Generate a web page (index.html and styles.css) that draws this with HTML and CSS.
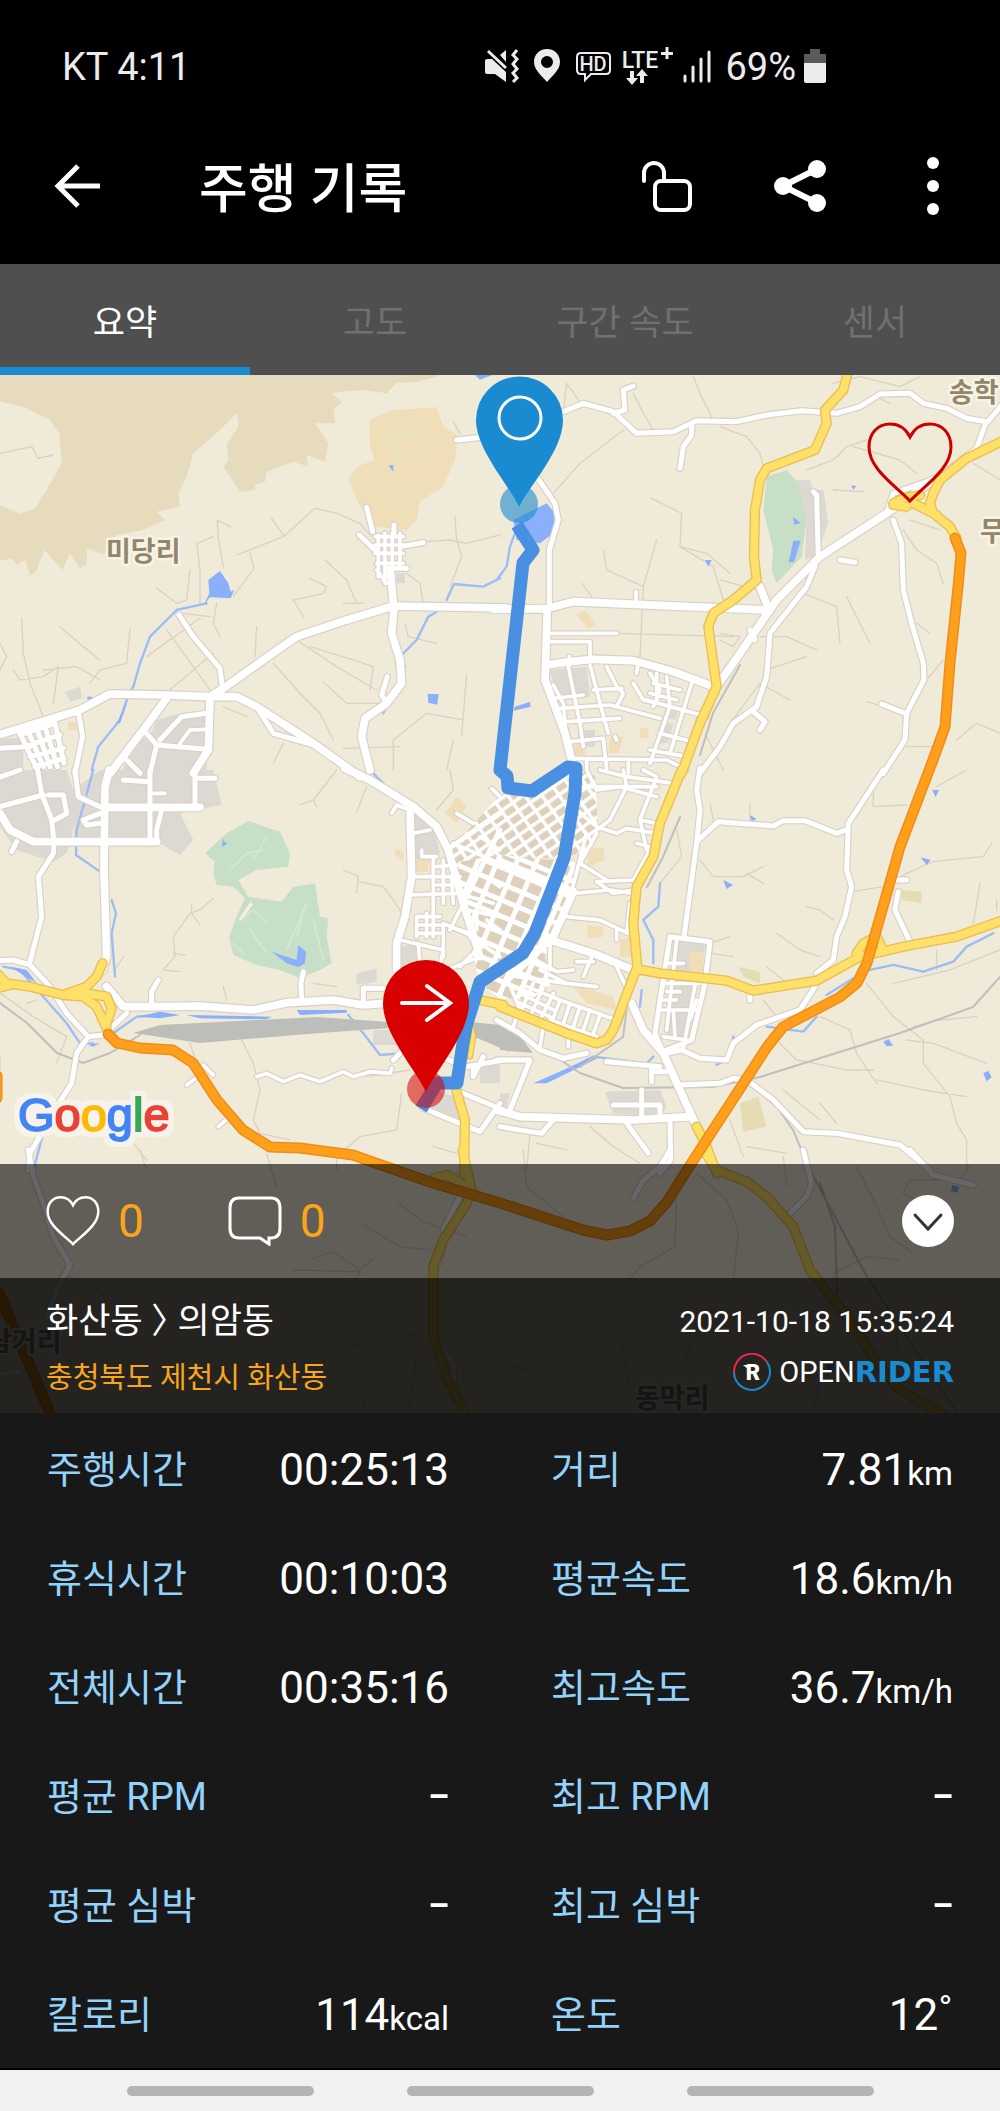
FILE: index.html
```html
<!DOCTYPE html>
<html lang="ko">
<head>
    <meta charset="UTF-8">
    <meta name="viewport" content="width=device-width, initial-scale=1.0">
    <title>주행 기록</title>
    <link rel="stylesheet" href="styles.css">
</head>
<body>

<!-- Status bar -->
<div class="status-bar">
    <span>KT 4:11</span>
    <div class="status-icons">
        <svg width="41" height="40" viewBox="0 0 41 40" fill="#ececec">
            <path d="M0 14q0-2 2-2h5l14 13v10L10 27H2q-2 0-2-2z"/>
            <path d="M15 8l6-5v12z"/>
            <path d="M3 4l18 17" stroke="#ececec" stroke-width="3"/>
            <path d="M32 3l-4 5 4 4-4 5 4 5-4 4 4 5-4 4" fill="none" stroke="#ececec" stroke-width="3"/>
        </svg>
        <svg width="34" height="40" viewBox="0 0 34 40">
            <path d="M13 2C5 2 0 8 0 15c0 8 8 14 13 20 5-6 13-12 13-20C26 8 21 2 13 2zm0 7a6 6 0 1 1 0 12 6 6 0 0 1 0-12z" fill="#ececec"/>
        </svg>
        <svg width="35" height="40" viewBox="0 0 35 40">
            <path d="M5 6h25q4 0 4 4v13q0 4-4 4H15l-6 6v-6H5q-4 0-4-4V10q0-4 4-4z" fill="none" stroke="#ececec" stroke-width="2"/>
            <text x="17" y="24" class="icon-text hd">HD</text>
        </svg>
        <svg width="56" height="40" viewBox="0 0 56 40" fill="#ececec">
            <text x="21" y="21" class="icon-text lte">LTE</text>
            <path d="M42 5h12v3H42zM46.500 0h3v12h-3zM11 24h4v7h4l-6 7-6-7h4zM21 36v-7h-4l6-7 6 7h-4v7z"/>
        </svg>
        <svg width="34" height="40" viewBox="0 0 34 40">
            <path d="M2 29v5M10 20v14M18 12v22M26 5v29" stroke="#ececec" stroke-width="3" stroke-linecap="round"/>
        </svg>
        <span>69%</span>
        <svg width="22" height="40" viewBox="0 0 22 40">
            <path d="M6 2h10v5h6v9H0V7h6z" fill="#5a5a5a"/>
            <path d="M0 16h22v18q0 2-2 2H2q-2 0-2-2z" fill="#ececec"/>
        </svg>
    </div>
</div>

<!-- App bar -->
<header class="app-bar">
    <button class="icon-button back" aria-label="뒤로">
        <svg width="60" height="60" viewBox="0 0 60 60" fill="none" stroke="#fff" stroke-width="5">
            <path d="M32 10L12 30l20 20M12 30h42"/>
        </svg>
    </button>
    <h1>주행 기록</h1>
    <button class="icon-button" aria-label="잠금 해제">
        <svg width="60" height="60" viewBox="0 0 60 60" fill="none" stroke="#fff" stroke-width="4">
            <path d="M7 25v-8a10 10 0 0 1 20 0v7" stroke-linecap="round"/>
            <rect x="18" y="25" width="35" height="29" rx="6"/>
        </svg>
    </button>
    <button class="icon-button" aria-label="공유">
        <svg width="60" height="60" viewBox="0 0 60 60" fill="#fff">
            <path d="M47 13L13 30l34 17" fill="none" stroke="#fff" stroke-width="6"/>
            <circle cx="13" cy="30" r="9"/>
            <circle cx="47" cy="13" r="9"/>
            <circle cx="47" cy="47" r="9"/>
        </svg>
    </button>
    <button class="icon-button" aria-label="더보기">
        <svg width="60" height="60" viewBox="0 0 60 60" fill="#fff">
            <circle cx="30" cy="7" r="6"/>
            <circle cx="30" cy="30" r="6"/>
            <circle cx="30" cy="53" r="6"/>
        </svg>
    </button>
</header>

<!-- Tabs -->
<nav class="tabs">
    <button class="tab active">요약</button>
    <button class="tab">고도</button>
    <button class="tab">구간 속도</button>
    <button class="tab">센서</button>
</nav>

<!-- Map -->
<main class="map">
    <svg class="map-canvas" viewBox="0 375 1000 1038" role="img" aria-label="주행 경로 지도">
        <defs>
            <pattern id="blocks-a" width="14" height="10" patternUnits="userSpaceOnUse" patternTransform="rotate(-35)">
                <rect width="14" height="10" fill="#ddd0bd"/>
                <path d="M0 0H14M0 0V10" stroke="#fff" stroke-width="7"/>
            </pattern>
            <pattern id="blocks-b" width="18" height="15" patternUnits="userSpaceOnUse" patternTransform="rotate(23)">
                <rect width="18" height="15" fill="#ddd0bd"/>
                <path d="M0 0H18M0 0V15" stroke="#fff" stroke-width="10"/>
            </pattern>
            <filter id="halo" x="-10%" y="-20%" width="120%" height="140%">
                <feMorphology in="SourceAlpha" operator="dilate" radius="5" result="wide"/>
                <feFlood flood-color="#f7f3ea"/>
                <feComposite in2="wide" operator="in" result="edge"/>
                <feMerge><feMergeNode in="edge"/><feMergeNode in="SourceGraphic"/></feMerge>
            </filter>

            <!-- White roads, one group per map tile -->
            <g id="roads">
                <g transform="translate(0 370) scale(.3333)">
                    <path class="r3" d="M-20 1100L240 1020 330 972 500 975 630 980 670 955 790 870 890 800 1040 750 1180 708 1520 714"/>
                    <path class="r3" d="M630 980H710L770 1010 940 1120 1080 1220M1172 610L1182 720 1175 790 1200 870 1205 940 1160 1000 1095 1045 1085 1100 1110 1200M500 985L430 1080 330 1210M630 990L625 1140 580 1210"/>
                    <path class="r2" d="M537 735L580 800 660 895 668 960M770 1010L820 1090 940 1125M235 1025L248 1100 225 1210M430 1080L470 1125 620 1138M470 1125L450 1210M480 1110L545 1040 620 1030M0 1135L90 1130M370 1160L420 1210"/>
                    <path class="r2" d="M1100 412L1118 485M1182 465V500M1078 495L1125 540M1270 518L1200 530M1160 595H1220M1370 210L1460 200M1162 920L1145 975 1160 1000"/>
                    <path class="r1" d="M540 1120L570 1080 620 1078M1135 495V620M1155 490V640M1177 490V640M1200 490V590M1125 500H1210M1125 525H1210M1125 550H1210M1130 580H1210M1130 600L1160 640"/>
                    <path class="r2" d="M60 1090L110 1195M85 1085L130 1190M110 1075L150 1190M135 1070L172 1190M165 1060L192 1180M60 1095L165 1060M75 1130L180 1095M90 1160L190 1135M105 1190L192 1165"/>
                </g>
                <g transform="translate(500 370) scale(.3333)">
                    <path class="r3" d="M-20 718L140 716 220 695 800 720M142 716L135 930 195 1090 215 1170M1300 330L1160 430 960 560 830 690 720 850 650 950M140 885L210 875 280 868 400 872 520 905 640 950M780 650L805 715"/>
                    <path class="r2" d="M148 716L148 540 175 450 165 400 110 320M190 125L250 100 340 125 410 190 520 185 590 152 710 155 800 135 905 122 1010 130 1080 110 1140 72 1230 70 1270 100 1340 115 1400 145 1460 155M340 130L375 120 370 60 400 48M575 165V195L550 230 540 295M1510 100L1455 165 1430 235 1310 325 1180 370 1160 430"/>
                    <path class="r2" d="M945 590L920 650 810 790 800 920 770 1010 700 1060 660 1130 600 1210M940 365L950 375 955 560M1180 450L1205 520 1210 660 1235 760 1270 880 1272 930 1220 1030 1215 1110 1150 1210M1145 1002L1215 1030M1020 570L1065 577M760 1025L795 1055 780 1080M750 780L765 810"/>
                    <path class="r1" d="M148 790H350M148 815H270V870M208 860V885M408 665V700M415 875L410 910M270 885L300 1000 325 1090M205 890L240 1060 250 1130M160 945L190 1000 200 1110M320 890L350 950 370 970 350 1010M280 960L365 955M165 985L250 975M180 1015L330 1005 480 1045M200 1055L360 1045M210 1115L310 1105 320 1200"/>
                    <path class="r1" d="M400 940L430 990 470 1000M450 910L480 960 460 1010M470 910L470 990M500 920L510 1010 450 1180M575 940L510 1150M440 990L620 1040M460 940L540 960M450 970L530 990M480 1090L575 1115M450 1140L560 1160M210 1165L500 1170 560 1200M600 1030L595 1050M385 1170V1210M260 1170V1200M345 1100L350 1110"/>
                </g>
                <g transform="translate(0 770) scale(.3333)">
                    <path class="r3" d="M1035 -5L1110 30 1240 110 1310 170 1345 240 1390 400 1440 560M1230 120L1235 320 1215 440 1190 520 1190 600M328 0L315 50 312 300 320 560 308 600M320 650L370 710 470 710 600 708 760 720 860 698 1000 690 1090 705 1150 700M0 130L30 180 100 215 470 215M315 112H600"/>
                    <path class="r2" d="M112 -5L125 70 155 150 162 220 160 250 115 320 125 440 90 575M450 0V210M585 0V110M-10 25L60 0M0 110L130 75M370 30L450 35M590 25H645M145 75L190 75 200 130 165 150M225 0L235 80 300 110M300 130L250 150 260 165 300 160M50 215L35 245M485 120L470 180V215"/>
                    <path class="r2" d="M-10 572L40 570 90 585 150 650 200 730 265 800 230 850 215 940 170 1010 90 1150 85 1200M265 800L310 795 380 730M455 710V665L475 630M905 690L903 640 910 605M1090 700V655H1150"/>
                    <path class="r1" d="M770 920L800 910 850 935 900 915 960 935 1030 905 1060 920 1110 905 1170 910 1175 895M560 945L600 915M610 885L640 915M655 1070L690 1040M455 70H495"/>
                    <path class="r2" d="M1180 870L1230 820M1270 1015L1440 1085 1500 1000M1365 960L1510 1020M1320 860L1400 890 1510 870M1420 890V920L1450 860"/>
                    <path class="r1" d="M1370 130L1420 160M1175 130L1190 105 1230 120M1265 240V260L1310 260M1240 190L1290 180M1235 320H1380M1225 375L1370 370 1480 400M1250 440H1320M1250 465H1320M1250 490H1320M1250 440V500M1280 430V500M1300 260V500M1330 270V400M1355 320L1360 400M1310 290L1370 285M1310 345H1380M1200 510L1330 540 1320 590M1330 560V460L1420 500M1390 400L1350 480"/>
                    <path class="r2" d="M1340 240L1500 130M1400 380L1500 180"/>
                    <path class="r1" d="M1360 220L1500 280M1440 200L1500 240M1400 420L1500 440M1430 430V480M1410 500L1500 560M1255 520L1260 580M1380 590L1430 540M1470 330L1500 350M1475 55L1500 80M1350 470L1410 490M1340 600L1440 560M1460 450L1500 480"/>
                </g>
                <g transform="translate(500 770) scale(.3333)">
                    <path class="r3" d="M0 275L220 365M150 510L280 550 400 600M220 365L160 500 30 620M395 700L430 780 490 850 590 1070M-10 1020L60 1040 400 1050 570 1040"/>
                    <path class="r2" d="M600 -5L590 60 600 120 590 220 552 500M590 215L655 155 820 168 850 152 915 152 1010 190 1040 180M1150 0L1045 160 1040 300 1055 350 1035 440 1010 500 1000 570 950 610M945 650L900 720 770 765 700 820 680 870 600 865 545 840 500 850M1190 330H1220M1195 365L1185 420 1230 515M750 672V690"/>
                    <path class="r2" d="M510 500L630 515 615 640 575 810 500 840M510 500L465 790 490 850M320 875L480 890M455 890V935M455 905H500M530 945L660 940 700 925 740 930 820 990 910 1085 1010 1090 1200 1125 1290 1200"/>
                    <path class="r1" d="M530 510L500 780M490 640H600M590 620L550 835M500 580H550M500 605H530M500 665H540M490 690H530M480 720H590M520 720L525 800M490 800L560 810M590 690L570 750"/>
                    <path class="r2" d="M340 1005H480V1040M425 960V1040M380 1060L445 1150M510 1050L512 1170 480 1210M0 1070L90 1085 125 1090 160 1050M-10 870L90 870 30 1020M-10 750L60 790 120 840 190 865 260 850"/>
                    <path class="r1" d="M260 0L290 60 360 50 470 80M370 0L380 50 330 150 290 180M240 50H470M300 0L380 20 520 40M430 0L470 20 420 150 440 240M230 120L290 170 350 190 380 175 470 190M420 150L470 160M410 220L450 230M450 240L400 330 290 335 340 370 400 360M260 190L215 365M290 190L240 280 320 330M220 370L330 360 400 370M200 440L300 450 385 490M350 480V510M390 400L380 490"/>
                    <path class="r1" d="M150 520V600M90 560L170 605 220 600M230 575H280M280 550L250 620M350 590L380 655M380 700L355 765M180 690L350 750M120 600L200 640 290 650M20 620L60 720M50 620L200 640M80 650L180 690 150 770M100 640L60 730M130 650L90 740M160 670L120 750M60 670L160 720M50 695L150 740M210 700L190 760M240 710L220 770M270 720L250 780M300 735L280 790M150 750L290 800M130 770L120 830M205 800V830M50 740L40 770"/>
                </g>
                <g transform="translate(0 1150) scale(.3333)">
                    <path class="r2" d="M85 0L100 80 130 160 160 260 210 345 170 420 140 500M-10 675L60 665M1350 70L1400 100 1330 240M1330 290L1310 350M1310 580L1360 640V710"/>
                </g>
                <g transform="translate(500 1150) scale(.3333)">
                    <path class="r2" d="M510 0L480 50 430 90 400 145M910 0L935 100 920 140 860 200M1230 0L1300 75 1420 105"/>
                </g>
            </g>

            <g id="yellow-roads">
                <path transform="translate(500 370) scale(.3333)" class="r3" d="M1045 0L1030 60 975 120 980 160 945 240 800 295 780 330 765 420 762 560 770 630 700 690 640 730 625 770 640 880 650 950 600 1060 545 1210M1510 212L1400 265 1320 330 1300 370 1290 400 1300 430 1350 470 1370 505M1240 400L1310 435M1180 400L1210 385 1260 375M1180 405L1220 410"/>
                <path transform="translate(0 770) scale(.3333)" class="r3" d="M-10 610L20 640 90 650 190 675 250 680 290 710 320 775M190 675L260 650 290 620 308 580M260 670L320 680 335 715 320 760M-10 655L30 645M1370 965L1395 1050 1392 1210M1440 690L1510 705"/>
                <path transform="translate(0 770) scale(.3333)" class="r1" d="M1410 760L1420 800 1410 860"/>
                <path transform="translate(500 770) scale(.3333)" class="r3" d="M545 0L480 160 460 260 410 350 400 460 412 590 385 660 340 780 320 810 290 820 200 790 0 710M412 598L480 610 680 632 760 662 950 632 1080 560 1220 528 1370 500 1510 450M590 1070L620 1130 650 1210M1070 550L1090 520 1130 500 1150 540"/>
                <path transform="translate(0 1150) scale(.3333)" class="r3" d="M1388 0L1415 120 1400 160 1330 270 1300 350V560L1340 680 1400 800M1300 85L1340 75 1410 115"/>
                <path transform="translate(500 1150) scale(.3333)" class="r3" d="M610 0L650 60 740 95 800 140 880 230 930 360 1010 460 1070 540 1130 640 1200 720 1340 800"/>
            </g>

            <g id="highways">
                <path d="M955 538L961 553 958 587 950 663 945 727 933 760 900 847 867 963 857 983 840 997 783 1027 767 1047 687 1170 667 1202 650 1221 630 1231 607 1235 583 1230 500 1203 433 1183 367 1160 353 1155 300 1148 270 1147 243 1130 217 1100 193 1063 173 1050 140 1048 117 1043 108 1034M-1 1293L20 1343 50 1413M-3 1076V1098"/>
            </g>
        </defs>

        <rect class="land" y="375" width="1000" height="1038"/>

        <!-- Terrain, parks and built-up areas -->
        <g transform="translate(0 370) scale(.3333)">
            <path class="hill" d="M0 0H1330L1310 20 1250 35 1190 40 1160 70 1090 60 1020 65 995 70 1025 95 1000 120 1005 160 945 160 985 220 975 275 920 255 925 290 880 275 800 305 795 335 765 345V360L720 365 670 290 685 270 680 225 715 170 712 128 650 190 580 250 560 320 535 370 540 410 470 425 495 450 430 480 350 495 310 555 262 535 258 585 240 595 210 550 188 600 133 540 105 610 90 615 75 570 50 585 35 565 0 572V405L60 432 105 415 140 360 185 280 178 190 150 150 70 110 0 95Z"/>
            <path class="site" d="M1108 150L1180 120 1310 112 1330 170 1375 195 1365 270 1330 350 1260 395 1250 450 1220 480 1120 470 1075 400 1045 330 1070 290 1125 270 1110 230ZM205 1055h25v25h-25z"/>
            <path class="site-lines" d="M1185 130L1205 450M1145 165h40v50h-40M1150 190H1180M1215 155h40v40h-50M1190 215L1260 200 1340 225M1260 200L1280 270M1200 250L1270 230M1070 330L1110 380 1150 370M1080 350L1160 310M1210 340H1265V380H1210M1220 380L1240 430"/>
            <path class="grey" d="M0 1105H70V1210H0ZM370 1190L430 1100 470 1140 440 1210H370ZM470 1050L540 1030H620V1210H450V1100ZM195 965l45-15 5 35-35 10zM1190 610h25v30h-25z"/>
        </g>
        <g transform="translate(500 370) scale(.3333)">
            <path class="park" d="M800 320L860 300 905 350 920 450 905 560 830 640 815 600 820 540 790 420Z"/>
            <path class="grey" d="M890 330H930L940 360H970L985 460 965 510 950 560 915 570 920 440ZM150 900L260 890 270 980 170 990ZM235 1080h50v50h-50zM480 1060h40l-15 60h-40zM500 1000l40 10-15 40-35-10z"/>
            <path class="site" d="M230 735l25-15 35 45-25 12zM330 1100h40l-15 50h-30zM220 1120h35v40h-35zM420 1075h25v30h-25z"/>
        </g>
        <g transform="translate(0 770) scale(.3333)">
            <path class="grey" d="M300 0H640L665 105 540 130 580 210 540 255 480 220H220L225 160 200 250 160 275 50 240 0 170V0H200L220 60ZM1070 610l60-15v40l-60 10zM1120 780h80v45h-80zM1290 960l80 20 10 80-100-40zM1440 880h60v60h-60zM1240 130l60 40 20 80-80 60zM1200 530l60-10v70h-60z"/>
            <path class="park" d="M615 250L680 190 745 153 840 185 870 250 865 290 770 300 715 330 745 380 845 395 880 350 945 340 960 440 985 445 980 500 995 580 960 600 900 625 840 600 770 585 700 555 688 500 710 440 735 385 700 350 650 345 640 310 645 275Z"/>
            <path class="park-lines" d="M690 300L740 250 790 240M800 200L760 270M700 520L730 550M750 480L800 550M860 540L920 400M890 500L915 410M940 450L970 570M720 450L760 420 800 460"/>
            <path d="M720 450L755 400" stroke="#f1efe4" stroke-width="10"/>
            <path class="site" d="M1335 130l35-50 30 25-30 55zM1185 235l25 10v25l-25-15zM1240 270l50-10-5 45h-40zM1430 480l60 20-15 40-50-20z"/>
        </g>
        <g transform="translate(500 770) scale(.3333)">
            <path class="grey" d="M315 965L480 960 500 1010 480 1040 340 1030ZM520 510H620L560 800H500ZM0 970l30 0-10 40-20 0z"/>
            <path class="site" d="M260 240l50-10 5 40-50 20zM570 545h40v60h-40zM260 465l50 5v30l-45 5zM360 510l30-10 15 60h-45zM210 640l130 40 10 40-90-20z"/>
            <path class="field" d="M715 590L780 605V640L730 620ZM720 1000L775 980 800 1070 730 1085ZM1205 360l60 5v35l-60-10z"/>
        </g>

        <!-- Lanes -->
        <g class="lanes">
            <path transform="translate(0 370) scale(.3333)" d="M0 250L95 230 115 265 160 255M655 505L652 450 692 470M655 505L670 590M600 700L600 600 590 520 640 500M712 555L850 500 945 415 1010 430 1080 460 1110 495M815 445L850 495M750 550L762 595 700 680M975 570L1040 630 1070 700M930 625L980 650 970 670 880 690 910 740M65 745L70 850 90 940 130 1040M180 770L250 830 300 870M0 820L20 860 0 900M390 775L380 880 300 900 270 940M130 900L230 890 300 930M500 780L630 960M440 860L600 745M510 960L640 850M770 770L765 860M890 810L1010 890 1130 960M820 880L900 970 960 1030 1000 1110M930 830L1060 870 1120 890 1110 960M970 935L1040 1000 1150 1000M1215 760L1225 800 1310 820M1280 515L1350 510 1400 520 1500 495M1365 440L1370 510 1385 560 1350 650M1400 915L1385 1095M1280 1030L1390 1050M1280 1030L1180 1110V1200M1030 1135L1200 1130M1220 610L1260 640 1270 700M470 655L530 700 560 690 570 600M650 700L640 760 660 800M550 730L630 740M40 900L60 930 130 920 175 890 160 1000M1360 1110L1340 1200M850 1120L820 1180M1090 700L1030 700M1360 155L1380 190M670 1010L740 1040"/>
            <path transform="translate(500 370) scale(.3333)" d="M190 120L200 40 250 110M400 70L430 130 460 180M580 20L600 70 640 150M660 170L740 200 780 250 795 310M370 180L240 280 160 370M455 385L545 430 540 530 620 550 690 610M540 530L640 590 670 690M660 630L770 660M310 540L320 600 430 650M470 510L430 650 420 860M245 640L275 680M660 790L720 800 700 830 660 810M350 790L700 800M780 800L860 800 950 840M910 670L1010 710 1020 820M1040 680L1080 760 1110 820M920 300L1000 270 1040 230 1100 210M1000 360L1090 365M1060 230L1200 270 1250 310M1210 480L1250 540 1310 580 1330 640M1230 450L1320 480M1250 760L1290 790M1370 1110L1430 1060 1500 1090M1220 1130L1300 1130M1330 870L1280 930M1100 995L1220 1030M800 900L920 860M690 1060L780 940 870 990M620 1100L670 1200M1420 280L1500 330M1000 40L1080 20 1200 50 1260 20M1130 80L1170 100"/>
            <path transform="translate(0 770) scale(.3333)" d="M640 385L600 420 570 430 520 500 525 560 490 600 540 605M520 550L555 555M1030 300L1075 320 1070 370M1075 335L1150 350 1180 390 1205 430M900 105L940 90 1010 0M940 90L950 110M1070 125L1100 50M725 810L760 880 780 960 760 1050 780 1090 870 1110M1205 970L1190 1080 1080 1100 1010 1160V1200M570 820L590 880M1230 900L1100 920M1350 0L1360 60 1310 120M400 1120L440 1170M0 670L100 740 200 800 170 880M80 700L110 690M575 400V430L600 465M100 500L105 530M370 560L345 600M670 650L680 690M940 640L1010 650M1300 1130L1370 1150M0 860V900"/>
            <path transform="translate(500 770) scale(.3333)" d="M630 100L640 150M750 100V150M600 270L640 320 730 320 790 290M740 310L790 340M920 410L960 420 1000 450M830 490L900 540 960 560M1055 365L1150 350 1220 310 1300 275 1450 260 1475 220M1120 50V110L1220 105M1310 50L1400 0M630 520L690 500M630 550L700 560M790 690L830 740M800 590L860 640M960 740L1050 780 1070 850 1130 940M1100 640L1180 740 1270 810V880L1350 980 1370 1060 1400 1110V1200M1130 930L1270 960 1400 980M830 810L890 870 1040 900 1120 900M1240 770L1320 750 1430 740M1310 540V600M1420 460L1440 340M1490 390V420M960 1000L1010 1060M850 960L960 1050M690 1050L730 1160M740 1130L860 1150M270 1070L340 1130 420 1180M110 1120L200 1140M90 1090L80 1200M1220 810L1300 820 1460 880M1180 640L1350 600 1500 540M530 180L545 260 480 340"/>
            <path transform="translate(0 1150) scale(.3333)" d="M420 0L440 60M800 10L830 110M940 325L1000 305 1080 360 1120 325M880 360L1080 365 1060 400 990 400M1190 155L1270 215 1400 260M1090 225L1200 290 1290 300M890 490L990 570 960 670M1000 570L1120 600 1220 550 1280 560M1250 600L1240 700 1220 790M1100 700L1090 780M210 380L310 430 320 480M980 660L920 760"/>
            <path transform="translate(500 1150) scale(.3333)" d="M70 0L80 110 190 200M590 70L680 150 715 240 700 400 600 530 530 680M530 120L525 290 420 350 380 400 420 420V500L360 550 390 720M280 520L360 560M0 640L170 680 180 720M1070 50L1130 170 1170 260 1240 310M1000 370L1100 320 1200 330M1410 50L1380 90 1230 90 1210 130 1270 160M850 20L860 110M960 680L940 790M1190 540V600L1220 570"/>
        </g>

        <!-- Water -->
        <path class="stream" transform="translate(0 370) scale(.3333)" d="M620 700L530 720 450 800 420 880 400 950 380 990 360 1050 295 1130 275 1200M1500 625L1450 650 1362 642 1340 690M1310 725L1285 740 1250 810 1205 855M1215 890L1150 1030M1560 450L1530 530 1520 590 1490 630"/>
        <path class="stream" transform="translate(0 770) scale(.3333)" d="M280 0L230 180 228 255 300 305M335 390L348 430 335 490 345 620M10 590L60 600 130 680 200 760 240 820 280 820M340 790L410 740 480 735M1045 735L1090 790 1140 855 1200 850M130 1090L100 1200M1120 10L1150 40"/>
        <path class="stream" transform="translate(500 770) scale(.3333)" d="M480 340L475 410 430 450 460 510V580M425 660L420 710M1480 490L1400 530 1360 575 1270 605 1180 585 1110 600M1060 625L980 675M950 740L910 785 800 770M700 800L690 860 650 885M460 860L440 880 280 860 200 900"/>
        <g class="water">
            <path transform="translate(0 370) scale(.3333)" d="M625 630L660 603 685 640 692 665 703 660 692 685 630 682 612 705 628 670ZM1283 972h33l-4 32-27-6ZM1420 10h70l-50 19ZM1165 286h15v20ZM262 980h15v8h-15zM385 990l-25 70-10 0z"/>
            <path transform="translate(500 370) scale(.3333)" d="M40 450L140 400 165 430 160 490 120 520 50 510ZM880 440l22 20-20 4zM880 512h22l-20 65h-16zM1053 347h16l-8 12zM615 570h20l-10 20zM45 1010L90 995 92 1010 40 1022Z"/>
            <path transform="translate(0 770) scale(.3333)" d="M668 210l14 12-16 8zM815 545L890 570 895 525 918 545 915 580 895 592 860 580ZM410 740L480 725 540 735 480 745ZM890 720H1040V728L900 735ZM560 735L815 740 800 748 600 745ZM265 825l35-7-20 12zM30 590l50 10 30 40z"/>
            <path transform="translate(500 770) scale(.3333)" d="M750 135l20 12-15 8zM670 330l30 15-20 12zM1297 60h20l-10 22zM1262 262l30 8-12 15zM1150 815l15-8 15 20-20 2zM1450 910l15-8 10 20-15 12zM100 940L280 860 290 866 140 940Z"/>
            <path transform="translate(500 1150) scale(.3333)" d="M1357 105l20 5-5 18-20-5zM980 640h20v20h-20z"/>
        </g>

        <!-- Railway -->
        <path class="yard" d="M133 1033L160 1025 317 1017 390 1022V1028L320 1033 200 1043 160 1037ZM500 1025L520 1037 533 1053 500 1050ZM450 1020L500 1025 510 1052 470 1035Z"/>
        <path class="rail" d="M0 1003L27 1023 57 1053 83 1063 110 1053 140 1035M320 1025L390 1023M1000 977L973 1007 900 1033 760 1077 713 1087 623 1088 580 1073 550 1053 500 1030M747 1082L777 1107 793 1130 810 1170 867 1277 957 1413M820 1183L835 1227 837 1293M628 1000L623 1037 580 1067M740 665L713 713 700 755M680 817L663 857 647 887"/>

        <use href="#roads" class="road-case"/>
        <path class="district-a" d="M448 852L500 795 530 792 562 770 595 775 598 830 590 850 564 858 500 858 460 870Z"/>
        <path class="district-b" d="M458 862L500 855 575 862 572 892 560 920 545 955 550 985 530 1000 500 998 480 985 470 940Z"/>
        <use href="#roads" class="road"/>
        <use href="#yellow-roads" class="yellow-case"/>
        <use href="#yellow-roads" class="yellow"/>
        <use href="#highways" class="highway-case"/>
        <use href="#highways" class="highway"/>

        <!-- Place names -->
        <g class="place">
            <text x="106" y="561">미당리</text>
            <text x="949" y="402">송학</text>
            <text x="980" y="541">무</text>
            <text x="-13" y="1351">삼거리</text>
            <text x="635" y="1408">동막리</text>
        </g>

        <text class="google" x="18" y="1131" filter="url(#halo)"><tspan class="g-blue">G</tspan><tspan class="g-red">o</tspan><tspan class="g-yellow">o</tspan><tspan class="g-blue">g</tspan><tspan class="g-green">l</tspan><tspan class="g-red">e</tspan></text>

        <!-- Ride track and pins -->
        <path class="track" d="M517 525L533 550 523 563 500 770 507 776 508 788 532 791 568 767 576 768 575 793 564 858 535 933 523 953 480 982 467 1023 463 1043 457 1083 437 1083 421 1109"/>
        <circle cx="519" cy="504" r="19" fill="#1b8bd1" opacity=".6"/>
        <path fill="#1b8bd1" d="M519 507C510 486 476 450 476 420a43 43 0 0 1 87 0c0 31-34 66-44 87z"/>
        <circle cx="520" cy="418" r="21" fill="none" stroke="#fff" stroke-width="3"/>
        <circle cx="426" cy="1089" r="19" fill="#d80000" opacity=".55"/>
        <path fill="#d80000" d="M426 1092C416 1070 383 1034 383 1003a43 43 0 0 1 86 0c0 31-33 67-43 89z"/>
        <path d="M402 1003h47M427 986l23 17-23 17" fill="none" stroke="#fff" stroke-width="4" stroke-linecap="round"/>
    </svg>

    <button class="favorite" aria-label="즐겨찾기">
        <svg width="86" height="81" viewBox="0 0 86 81">
            <path d="M43 79C28 63 2 47 2 25 2 11 11 2 23 2c9 0 16 5 20 13C47 7 54 2 63 2c12 0 21 9 21 23 0 22-26 38-41 54Z" fill="none" stroke="#cc0000" stroke-width="3"/>
        </svg>
    </button>

    <div class="map-footer">
        <div class="reactions">
            <button class="reaction" aria-label="좋아요">
                <svg width="54" height="50" viewBox="0 0 86 81">
                    <path d="M43 78C28 63 2 47 2 25 2 11 11 2 23 2c9 0 16 5 20 13C47 7 54 2 63 2c12 0 21 9 21 23 0 22-26 38-41 53Z" fill="none" stroke="#fff" stroke-width="4"/>
                </svg>
                <span>0</span>
            </button>
            <button class="reaction" aria-label="댓글">
                <svg width="54" height="50" viewBox="0 0 54 50">
                    <path d="M11 2h32q9 0 9 10v20q0 10-9 10h-2v6l-9-6H11Q2 42 2 32V12Q2 2 11 2z" fill="none" stroke="#fff" stroke-width="3"/>
                </svg>
                <span>0</span>
            </button>
            <button class="collapse" aria-label="접기">
                <svg width="52" height="52" viewBox="0 0 52 52">
                    <circle cx="26" cy="26" r="26" fill="#fff"/>
                    <path d="M13 20l13 14 13-14" fill="none" stroke="#333" stroke-width="3" stroke-linecap="round"/>
                </svg>
            </button>
        </div>
        <div class="ride-info">
            <div class="places">
                <p class="course">화산동 〉 의암동</p>
                <p class="region">충청북도 제천시 화산동</p>
            </div>
            <div class="source">
                <time datetime="2021-10-18T15:35:24">2021-10-18 15:35:24</time>
                <div class="brand">
                    <svg width="38" height="38" viewBox="0 0 38 38" fill="none" stroke-width="2">
                        <path d="M1 20A18 18 0 0 1 34 9" stroke="#e8264f"/>
                        <path d="M34 9A18 18 0 1 1 1 20" stroke="#1b8bd1"/>
                        <path d="M10 12h8l-3 4z" fill="#fff"/>
                        <text x="20" y="27" class="brand-mark">R</text>
                    </svg>
                    <span>OPEN<b>RIDER</b></span>
                </div>
            </div>
        </div>
    </div>
</main>

<!-- Ride stats -->
<dl class="stats">
    <div class="stat"><dt>주행시간</dt><dd>00:25:13</dd></div>
    <div class="stat"><dt>거리</dt><dd>7.81<small>km</small></dd></div>
    <div class="stat"><dt>휴식시간</dt><dd>00:10:03</dd></div>
    <div class="stat"><dt>평균속도</dt><dd>18.6<small>km/h</small></dd></div>
    <div class="stat"><dt>전체시간</dt><dd>00:35:16</dd></div>
    <div class="stat"><dt>최고속도</dt><dd>36.7<small>km/h</small></dd></div>
    <div class="stat"><dt>평균 RPM</dt><dd class="empty">–</dd></div>
    <div class="stat"><dt>최고 RPM</dt><dd class="empty">–</dd></div>
    <div class="stat"><dt>평균 심박</dt><dd class="empty">–</dd></div>
    <div class="stat"><dt>최고 심박</dt><dd class="empty">–</dd></div>
    <div class="stat"><dt>칼로리</dt><dd>114<small>kcal</small></dd></div>
    <div class="stat"><dt>온도</dt><dd>12˚</dd></div>
</dl>

<!-- System navigation -->
<div class="system-nav">
    <button aria-label="최근 앱"></button>
    <button aria-label="홈"></button>
    <button aria-label="뒤로 가기"></button>
</div>

</body>
</html>
```
FILE: styles.css
```css
* {
    box-sizing: border-box;
}
body {
    margin: 0;
    background-color: #181818;
    color: #fff;
    font-family: Roboto, "Noto Sans CJK KR", sans-serif;
}
button {
    padding: 0;
    border: none;
    background: none;
    color: inherit;
    font: inherit;
    cursor: pointer;
}
svg {
    display: block;
}

/* Status bar */
.status-bar {
    display: flex;
    justify-content: space-between;
    align-items: center;
    height: 134px;
    padding: 0 174px 0 62px;
    background-color: #000;
    color: #ececec;
    font-size: 38px;
}
.status-icons {
    display: flex;
    align-items: center;
    gap: 8px;
}
.icon-text {
    fill: #ececec;
    font-weight: 500;
    text-anchor: middle;
}
.hd {
    font-size: 20px;
}
.lte {
    font-size: 23px;
}

/* App bar */
.app-bar {
    display: flex;
    align-items: center;
    gap: 73px;
    height: 130px;
    padding: 0 37px 26px 46px;
    background-color: #000;
}
.app-bar h1 {
    flex: 1;
    margin: 0 0 0 20px;
    padding-top: 8px;
    font-size: 53px;
    font-weight: 500;
    line-height: 60px;
}

/* Tabs */
.tabs {
    display: flex;
    height: 111px;
    background-color: #4f4f4f;
}
.tab {
    flex: 1;
    border-top: 8px solid transparent;
    border-bottom: 8px solid transparent;
    color: #707070;
    font-size: 35px;
}
.tab.active {
    border-bottom-color: #1b8bd1;
    color: #fff;
}

/* Map */
.map {
    position: relative;
    overflow: hidden;
}
.map-canvas {
    width: 100%;
    height: auto;
}
.land {
    fill: #f0ebd8;
}
.hill {
    fill: #e6dbbc;
}
.park {
    fill: #c6dfc6;
}
.site {
    fill: #f0deb9;
}
.grey {
    fill: #dcd8d2;
}
.field {
    fill: #e6dcb4;
}
.water {
    fill: #8ab0fb;
}
.yard {
    fill: #bdbdba;
}
.site-lines,
.park-lines,
.lanes,
.stream,
.rail,
.track,
.road,
.road-case,
.yellow,
.yellow-case,
.highway,
.highway-case {
    fill: none;
    stroke-linecap: round;
    stroke-linejoin: round;
}
.site-lines {
    stroke: #e9e3b9;
    stroke-width: 9;
}
.park-lines {
    stroke: #d4e8d4;
    stroke-width: 5;
}
.lanes {
    stroke: #dbd0c4;
    stroke-width: 4;
}
.stream {
    stroke: #9bbcf5;
    stroke-width: 7;
}
.rail {
    stroke: #bfbfbd;
    stroke-width: 2;
}
.r1 {
    stroke-width: calc(11px + var(--casing));
}
.r2 {
    stroke-width: calc(15px + var(--casing));
}
.r3 {
    stroke-width: calc(23px + var(--casing));
}
.road {
    --casing: 0px;
    stroke: #fff;
}
.road-case {
    --casing: 7px;
    stroke: #d9d0c8;
}
.yellow {
    --casing: 0px;
    stroke: #ffe068;
}
.yellow-case {
    --casing: 8px;
    stroke: #e8bd55;
}
.highway {
    stroke: #ff9f1c;
    stroke-width: 8;
}
.highway-case {
    stroke: #ee8d17;
    stroke-width: 11;
}
.district-a {
    fill: url(#blocks-a);
}
.district-b {
    fill: url(#blocks-b);
}
.place {
    fill: #93866a;
    stroke: #f7f3e6;
    stroke-width: 5;
    stroke-linejoin: round;
    paint-order: stroke;
    font-size: 27px;
    font-weight: 700;
}
.google {
    font-family: "Liberation Sans", sans-serif;
    font-size: 47px;
    stroke-width: 2;
}
.g-blue {
    fill: #4285f4;
    stroke: #4285f4;
}
.g-red {
    fill: #ea4335;
    stroke: #ea4335;
}
.g-yellow {
    fill: #fbbc05;
    stroke: #fbbc05;
}
.g-green {
    fill: #34a853;
    stroke: #34a853;
}
.track {
    stroke: #4a90e2;
    stroke-width: 13;
    stroke-linecap: butt;
}
.favorite {
    position: absolute;
    top: 47px;
    right: 47px;
}

/* Panels over the map */
.map-footer {
    position: absolute;
    right: 0;
    bottom: 0;
    left: 0;
}
.reactions {
    display: flex;
    align-items: center;
    gap: 84px;
    height: 114px;
    padding: 0 46px;
    background-color: rgba(0, 0, 0, 0.6);
}
.reaction {
    display: flex;
    align-items: center;
    gap: 18px;
    color: #f9a61a;
    font-size: 46px;
}
.collapse {
    margin-left: auto;
}
.ride-info {
    display: flex;
    justify-content: space-between;
    height: 135px;
    padding: 16px 46px 0 46px;
    background-color: rgba(0, 0, 0, 0.85);
}
.ride-info p {
    margin: 0;
    line-height: 56px;
}
.course {
    font-size: 35px;
    font-feature-settings: "halt";
}
.region {
    color: #f9a61a;
    font-size: 29px;
}
.source {
    display: flex;
    flex-direction: column;
    align-items: flex-end;
    font-size: 30px;
    line-height: 56px;
}
.brand {
    display: flex;
    align-items: center;
    gap: 8px;
    font-size: 29px;
    line-height: 44px;
}
.brand b {
    color: #1b8bd1;
    font-family: "DejaVu Sans", sans-serif;
    font-weight: 700;
}
.brand-mark {
    fill: #fff;
    font-size: 22px;
    font-weight: 900;
    text-anchor: middle;
}

/* Stats */
.stats {
    display: grid;
    grid-template-columns: 1fr 1fr;
    column-gap: 102px;
    margin: 0;
    padding: 0 47px 1px;
}
.stat {
    display: flex;
    justify-content: space-between;
    align-items: center;
    height: 109px;
}
.stat dt {
    padding-bottom: 2px;
    color: #92d2fb;
    font-size: 38px;
}
.stat dd {
    margin: 0;
    padding-top: 4px;
    font-size: 44px;
}
.stat small {
    font-size: 33px;
}
.stat .empty {
    font-size: 33px;
    font-weight: 700;
}

/* System navigation */
.system-nav {
    display: flex;
    justify-content: center;
    align-items: center;
    gap: 93px;
    height: 43px;
    border-top: 2px solid #000;
    background-color: #f1f1f1;
}
.system-nav button {
    width: 187px;
    height: 10px;
    border-radius: 5px;
    background-color: #b4b4b4;
}
```
